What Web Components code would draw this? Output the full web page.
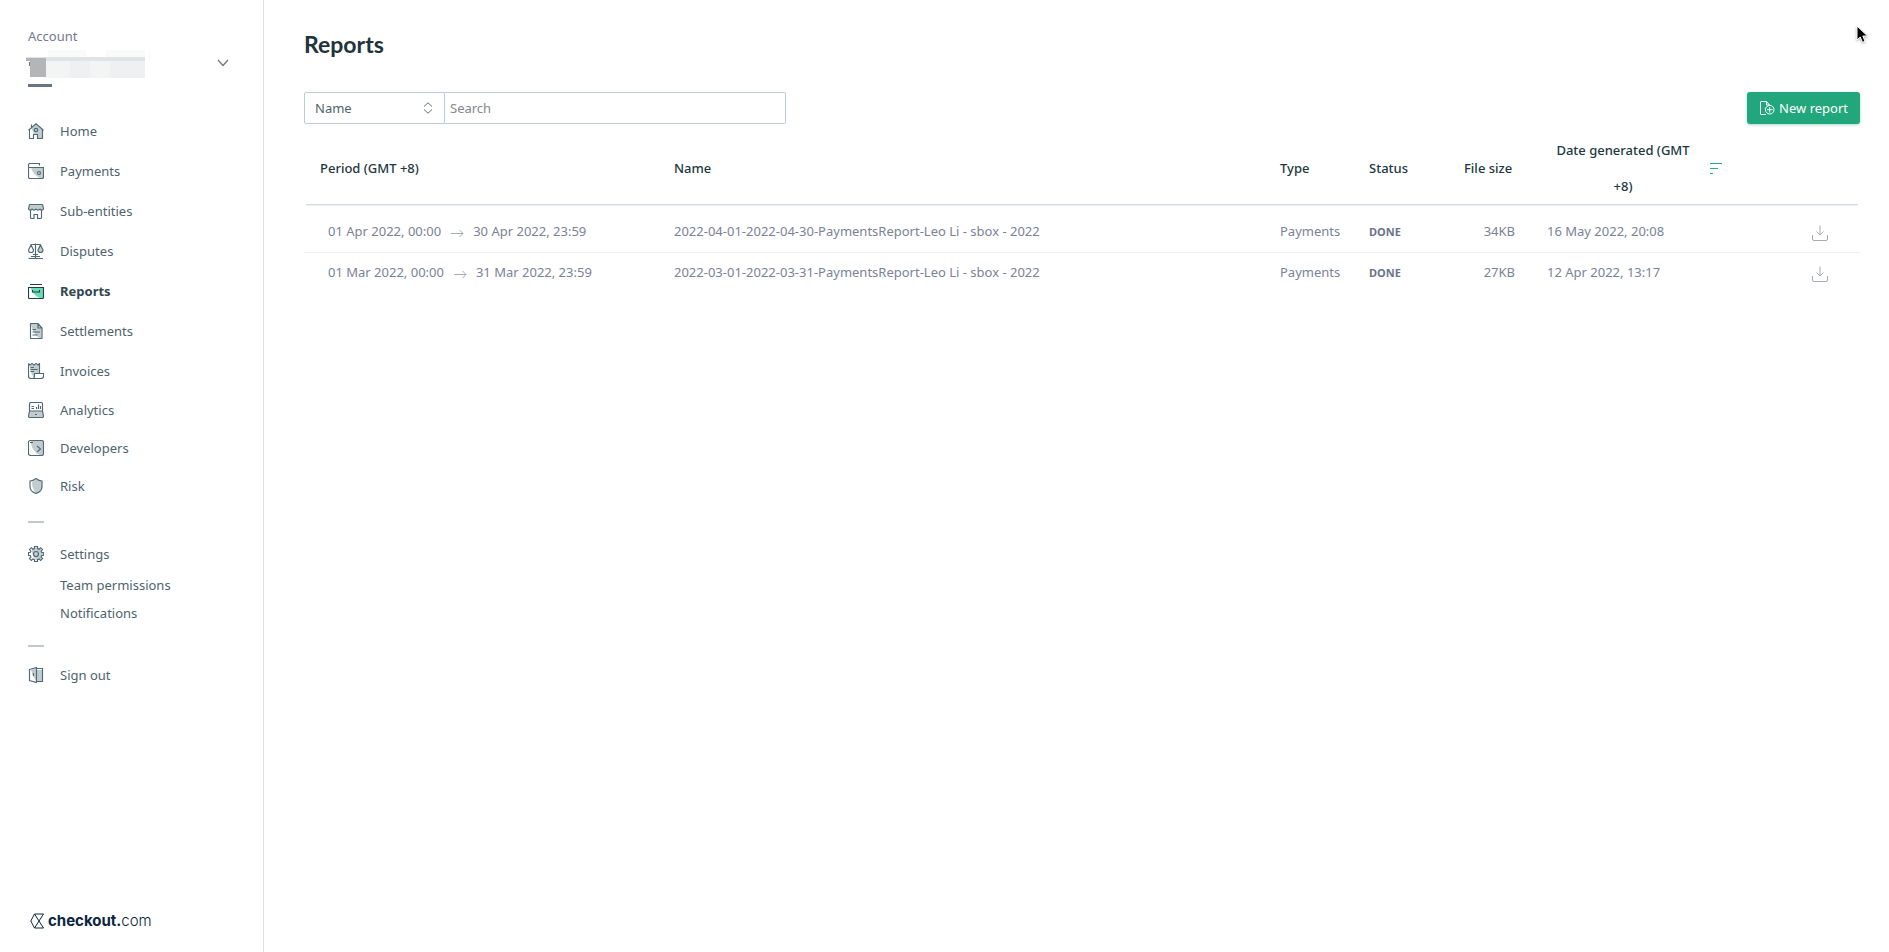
<!DOCTYPE html>
<html lang="en">
<head>
<meta charset="utf-8">
<title>Reports</title>
<style>
  body { margin: 0; background: #fff; font: 13px/20px "Noto Sans", sans-serif; color: #4e636d; }
</style>
</head>
<body>
<app-shell>
  <account-switcher slot="side"></account-switcher>
  <side-nav slot="side">
    <nav-item icon="home">Home</nav-item>
    <nav-item icon="payments">Payments</nav-item>
    <nav-item icon="entities">Sub-entities</nav-item>
    <nav-item icon="disputes">Disputes</nav-item>
    <nav-item icon="reports" active>Reports</nav-item>
    <nav-item icon="settlements">Settlements</nav-item>
    <nav-item icon="invoices">Invoices</nav-item>
    <nav-item icon="analytics" size="compact">Analytics</nav-item>
    <nav-item icon="developers" size="compact">Developers</nav-item>
    <nav-item icon="risk" size="compact">Risk</nav-item>
    <nav-divider></nav-divider>
    <nav-item icon="settings" size="small">Settings</nav-item>
    <nav-item size="sub">Team permissions</nav-item>
    <nav-item size="sub">Notifications</nav-item>
    <nav-divider spacing="large"></nav-divider>
    <nav-item icon="signout" size="sub">Sign out</nav-item>
  </side-nav>
  <brand-logo slot="brand"></brand-logo>
  <page-title>Reports</page-title>
  <report-toolbar>
    <report-filter></report-filter>
    <new-button slot="action">New report</new-button>
  </report-toolbar>
  <report-table></report-table>
  <mouse-pointer></mouse-pointer>
</app-shell>

<script>
const define = (name, html, setup) => {
  const template = document.createElement('template');
  template.innerHTML = html;
  customElements.define(name, class extends HTMLElement {
    constructor() {
      super();
      this.attachShadow({ mode: 'open' }).append(template.content.cloneNode(true));
    }
    connectedCallback() { if (setup) setup(this, this.shadowRoot); }
  });
};

const icons = {
  home: '<path class="f" d="M8 1.500 3.500 5.600C5 9 5.500 10.500 6 11.500h4v4h4V7.500h1.500z"/><path d="M3.500 4.800V1.500M.5 7.300 8 .8l7.500 6.500M1.500 7v8q0 .5.5.5h3.500v-4h4v4H14q.5 0 .5-.5V7"/><circle cx="8" cy="7" r="1.700"/>',
  payments: '<path class="f" d="M3 4.500h12.500v11H13C7 13 5 10 3 4.500z"/><path d="M11.500 2.500V.5H2Q.5.5.5 2v12q0 1.500 1.500 1.500h12q1.500 0 1.500-1.500V4.500H1.500M.5 2v1.500q0 1 1 1"/><circle cx="11" cy="10" r="1.500"/>',
  entities: '<path class="f" d="M2 1.500h12q.6 0 .8.800L15.500 6c-.5 1.500-2.500 1.500-3.500.2-1 1.200-3 1.200-4 0-1 1.200-3 1.200-4 0C3 7.500 1 7.500.5 6l.8-3.700q.1-.8.700-.8z"/><path d="M2 1.500h12q.6 0 .8.800L15.500 6c-.5 1.500-2.500 1.500-3.500.2-1 1.200-3 1.200-4 0-1 1.200-3 1.200-4 0C3 7.500 1 7.500.5 6l.8-3.700q.1-.8.700-.8zM2.500 7.500v7q0 1 1 1h2.500v-4h3.500v4h3q1 0 1-1v-7"/>',
  disputes: '<path class="f" d="m12.500 2 2.500 5q.5 2-2.500 2.500Q10 9 10 7z"/><path d="M2.500 1.500h10M7.500.5v14.500M3 13.500h9M.5 15.500H15M5 11.500h5M3 2 .5 7q0 2.500 2.500 2.500T5.500 7zM12.500 2 10 7q0 2.500 2.500 2.500T15 7z"/>',
  reports: '<path fill="#65ddb5" d="M2.500 4.500h13v11H13C8 14 4.500 10 2.500 4.500z"/><path d="M2 1.500h12M.5 4.500h15v10q0 1-1 1h-13q-1 0-1-1zM4.500 7v2h7V7"/>',
  settlements: '<path class="f" d="M3 1h7l3.500 4v10.500H12C8 13 4 8 3 1z"/><path d="M10 .5H3q-.5 0-.5.5v14q0 .5.5.5h10.500q.5 0 .5-.5V5zM10 .5V5h4M4.500 6.500H8M4.500 9h7.500M4.500 12h5"/>',
  invoices: '<path class="f" d="M1.500 2h10v8H7v5C3.500 13 2 7 1.500 2z"/><path d="m.5.500 1.500 1.500L4 .5l2 1.500L8 .5 10 2l1.500-1.500V10M.5.500V13q0 2.500 2.500 2.500h10q2.500 0 2.500-2.500v-2.500H6.500V13q0 2.500-2 2.500M2.500 4.500H6M2.500 6.500h7M2.500 8.500H6"/>',
  analytics: '<path class="f" d="M1.500 9h13l1 5.500-1 1h-13l-1-1z"/><path d="M1.500 9V2q0-1.500 1.500-1.500h10Q14.500.5 14.500 2v7M1.500 9h13l1 5q0 1.500-1 1.500h-13q-1 0-1-1.500zM7 12.500h2M3.500 4.500H6M3.500 6.500H6M8.500 7V5M10.500 7V2.500M12.500 7V4"/>',
  developers: '<path class="f" d="M3 1h12v14.500h-2C8 14 4 9 3 4z"/><rect x=".5" y=".5" width="15" height="15" rx="2"/><path d="M2 2.500h3M9 6l3.500 3L9 12"/>',
  risk: '<path class="f" d="M8 1.500 4 4c0 4 1 8 4 11.500 4-1.500 6-4 6-7V3.500z"/><path d="M8 .5q-3 2.500-6 2.500v5.500q0 5 6 7 6-2 6-7V3Q11 3 8 .5z"/>',
  settings: '<path class="f" d="M4 3 8 1.500l5 1.500 2 5-2 5-4 1.500C5 12 4 8 4 3z"/><path d="M6.500 2.500v-2h3v2l1.600.7 1.500-1.500 1.900 1.900-1.400 1.500.6 1.400h1.800v3h-1.800l-.6 1.500 1.400 1.400-1.900 2-1.500-1.500-1.600.7v1.900h-3v-1.900l-1.600-.7-1.500 1.500-1.900-2L2.900 11l-.6-1.500H.5v-3h1.800l.6-1.400-1.400-1.500 1.900-1.900 1.500 1.500z"/><circle cx="8" cy="8" r="2.500"/>',
  signout: '<path class="f" d="M3 3l5-2v2h6v11H8C6 11 4 7 3 3z"/><path d="M1.500 2.500 8.500.5v15l-7-2zM8.500 1.500h6v13h-6M5.500 6v3"/>'
};

define('app-shell', `
  <style>
    :host { display: flex; min-height: 100vh; position: relative; }
    aside { box-sizing: border-box; flex: 0 0 264px; border-right: 1px solid #dddfe0; padding: 26px 0 22px 28px; display: flex; flex-direction: column; }
    .brand { margin-top: auto; }
    main { flex: 1; min-width: 0; padding: 27px 29px 28px 40px; }
  </style>
  <aside><slot name="side"></slot><div class="brand"><slot name="brand"></slot></div></aside>
  <main><slot></slot></main>`);

define('account-switcher', `
  <style>
    :host { display: block; color: #727a90; }
    button { all: unset; box-sizing: border-box; width: 100%; height: 34px; padding-right: 34px; display: flex; align-items: center; justify-content: space-between; cursor: pointer; }
    .name { margin-left: -4px; }
    .bar { width: 24px; height: 3px; margin-top: 4px; background: #6c7389; }
  </style>
  <div>Account</div>
  <button type="button" aria-label="Switch account">
    <svg class="name" width="128" height="30" viewBox="0 0 128 30">
      <path fill="#f9fafa" d="M24 2h38v8H24zM82 2h39v8H82zM125 1h1v12h-1z"/>
      <path fill="#f3f5f5" d="M22 13h99v17H22z"/>
      <path fill="#eef0f1" d="M46 13h20v17H46zM86 13h35v17H86z"/>
      <path fill="#e1e4e4" d="M2 9h119v4H2z"/>
      <path fill="#b3b5b6" d="M6 10h16v19H6zM2 10h6v3H2z"/>
      <path fill="#6c7389" d="M5 14h1v4H5z"/>
    </svg>
    <svg width="12" height="8" fill="none" stroke="#6c7389" stroke-width="1.200"><path d="M1 1l5 5.500L11 1"/></svg>
  </button>
  <div class="bar"></div>`);

define('side-nav', `
  <style>:host { display: block; padding-top: 24px; }</style>
  <nav aria-label="Main"><slot></slot></nav>`);

define('nav-divider', `
  <style>
    :host { display: block; padding: 16px 0 14px; }
    :host([spacing=large]) { padding-top: 18px; }
    hr { margin: 0; width: 16px; height: 2px; border: 0; background: #bfc9cc; }
  </style><hr>`);

define('nav-item', `
  <style>
    :host { display: block; }
    a { display: grid; grid-template-columns: 16px 1fr; gap: 16px; align-items: center; height: 40px; color: inherit; text-decoration: none; }
    :host([size=compact]) a { height: 38px; }
    :host([size=small]) a { height: 34px; }
    :host([size=sub]) a { height: 28px; }
    :host([active]) { color: #31474f; font-weight: 700; }
    svg { fill: none; stroke: #506973; stroke-width: 1.150; display: block; }
    :host([active]) svg { stroke: #263d45; }
    .f { fill: #c2cccf; stroke: none; }
    [fill] { stroke: none; }
  </style>
  <a href="#"><svg width="16" height="16" viewBox="0 0 16 16" aria-hidden="true"></svg><span><slot></slot></span></a>`,
  (el, root) => {
    root.querySelector('svg').innerHTML = icons[el.getAttribute('icon')] || '';
    if (el.hasAttribute('active')) root.querySelector('a').setAttribute('aria-current', 'page');
  });

define('brand-logo', `
  <style>
    :host { display: block; }
    a { display: flex; align-items: center; gap: 4px; height: 18px; padding-left: 2px; color: #0b2540; text-decoration: none; font: 300 15px/18px Inter, sans-serif; }
    b { font-weight: 700; }
    svg { fill: none; stroke: #0b2540; }
  </style>
  <a href="#"><svg width="14" height="16"><path d="M4.500 1h9L4.500 15h9L4.500 1 .8 8l3.700 7"/></svg><span><b>checkout.</b>com</span></a>`);

define('page-title', `
  <style>:host { display: block; } h1 { margin: 0; font-family: Lato, sans-serif; font-size: 23px; line-height: 34px; font-weight: 700; color: #1e333b; }</style>
  <h1><slot></slot></h1>`);

define('report-toolbar', `
  <style>:host { display: flex; justify-content: space-between; align-items: center; margin-top: 31px; }</style>
  <slot></slot><slot name="action"></slot>`);

define('report-filter', `
  <style>
    :host { display: flex; flex: 0 1 482px; height: 32px; }
    * { box-sizing: border-box; font: inherit; }
    .pick { flex: 0 0 141px; display: grid; align-items: center; }
    .pick > * { grid-area: 1 / 1; }
    select { appearance: none; width: 100%; height: 32px; padding: 0 10px; color: #4e636d; background: #fff; border: 1px solid #bdcdd6; border-radius: 2px 0 0 2px; }
    svg { justify-self: end; margin-right: 12px; fill: none; stroke: #5a727c; pointer-events: none; }
    input { flex: 1; min-width: 0; padding: 0 5px; border: 1px solid #bdcdd6; border-left-width: 0; border-radius: 0 2px 2px 0; outline: 0; }
    input::placeholder { color: #85898c; opacity: 1; }
  </style>
  <div class="pick">
    <select aria-label="Search by"><option>Name</option></select>
    <svg width="10" height="12"><path d="M1 4.500 5 .8l4 3.700M1 7.500l4 3.700 4-3.700"/></svg>
  </div>
  <input type="text" placeholder="Search" aria-label="Search">`);

define('new-button', `
  <style>
    :host { display: block; }
    button { display: flex; align-items: center; gap: 4px; height: 32px; padding: 0 12px 0 13px; border: 0; border-radius: 3px; background: #22a67c; color: #fff; font: inherit; white-space: nowrap; box-shadow: 0 1px 3px #22a67c66; }
    svg { fill: none; stroke: #fff; }
  </style>
  <button type="button"><svg width="15" height="15"><path d="M6 13.500H1q-.5 0-.5-.5V1q0-.5.500-.5h5.500l3 3.500M6.500.5V4h3"/><circle cx="9.700" cy="8.700" r="4.300"/><path d="M9.700 6v5.500M7 8.700h5.500"/></svg><slot></slot></button>`);

define('report-table', `
  <style>
    :host { display: block; margin-top: 8px; color: #7b8296; }
    table { width: 100%; table-layout: fixed; border-collapse: collapse; }
    .period { width: 354px; } .type { width: 89px; } .status { width: 95px; } .file { width: 83px; } .date { width: 249px; } .get { width: 80px; }
    th { height: 72px; padding: 0 0 0 16px; text-align: left; font-weight: 500; line-height: 36px; color: #22383f; white-space: nowrap; }
    th.sort { white-space: normal; }
    .sort div { display: grid; grid-template-columns: 152px 12px; gap: 11px; align-items: center; text-align: center; }
    td { height: 38px; padding: 0 0 2px 16px; white-space: nowrap; }
    tbody tr + tr + tr td { border-top: 1px solid #eef0f1; }
    td:first-child { padding-left: 24px; }
    td.size { padding-left: 0; padding-right: 16px; text-align: right; }
    td.save { padding-left: 0; text-align: center; }
    td.rule { height: 8px; padding: 0 2px; vertical-align: top; }
    .rule i { display: block; height: 1px; background: #d5dadd; box-shadow: 0 1px 1px #e9eef0; }
    td b { font-size: 11px; color: #6c7389; }
    button { all: unset; cursor: pointer; }
    svg { fill: none; stroke: #a5abbb; vertical-align: middle; }
    .arrow { margin: 0 9px; }
  </style>
  <table>
    <colgroup><col class="period"><col><col class="type"><col class="status"><col class="file"><col class="date"><col class="get"></colgroup>
    <thead><tr><th>Period (GMT +8)</th><th>Name</th><th>Type</th><th>Status</th><th>File size</th>
      <th class="sort" aria-sort="descending"><div><span>Date generated (GMT +8)</span><svg width="12" height="12" style="stroke:#22b286"><path d="M0 1.500h12M0 6.500h8M0 11.500h3"/></svg></div></th><td></td></tr></thead>
    <tbody><tr><td class="rule" colspan="7"><i></i></td></tr></tbody>
  </table>`,
  (el, root) => {
    const rows = [
      ['01 Apr 2022, 00:00', '30 Apr 2022, 23:59', '2022-04-01-2022-04-30-PaymentsReport-Leo Li - sbox - 2022', '34KB', '16 May 2022, 20:08'],
      ['01 Mar 2022, 00:00', '31 Mar 2022, 23:59', '2022-03-01-2022-03-31-PaymentsReport-Leo Li - sbox - 2022', '27KB', '12 Apr 2022, 13:17']
    ];
    root.querySelector('tbody').insertAdjacentHTML('beforeend', rows.map(([from, to, name, size, date]) => `
      <tr><td>${from}<svg class="arrow" width="14" height="10"><path d="M1 5.500h12M9.500 2 13 5.500 9.500 9"/></svg>${to}</td>
      <td>${name}</td><td>Payments</td><td><b>DONE</b></td><td class="size">${size}</td><td>${date}</td>
      <td class="save"><button type="button" aria-label="Download ${name}"><svg width="16" height="16"><path d="M.5 10v4q0 1.500 1.500 1.500h12q1.500 0 1.500-1.500v-4M8 .5v9M4.500 6.500 8 10l3.500-3.500"/></svg></button></td></tr>`).join(''));
  });

define('mouse-pointer', `
  <style>:host { position: absolute; top: 25px; right: 20px; pointer-events: none; } svg { display: block; filter: drop-shadow(0 1px 1px #0005); }</style>
  <svg width="13" height="19"><path fill="#000" stroke="#fff" d="M1 1v14l3.200-3 2.300 5.300 2.500-1L6.800 11h4.700z"/></svg>`);
</script>
</body>
</html>
